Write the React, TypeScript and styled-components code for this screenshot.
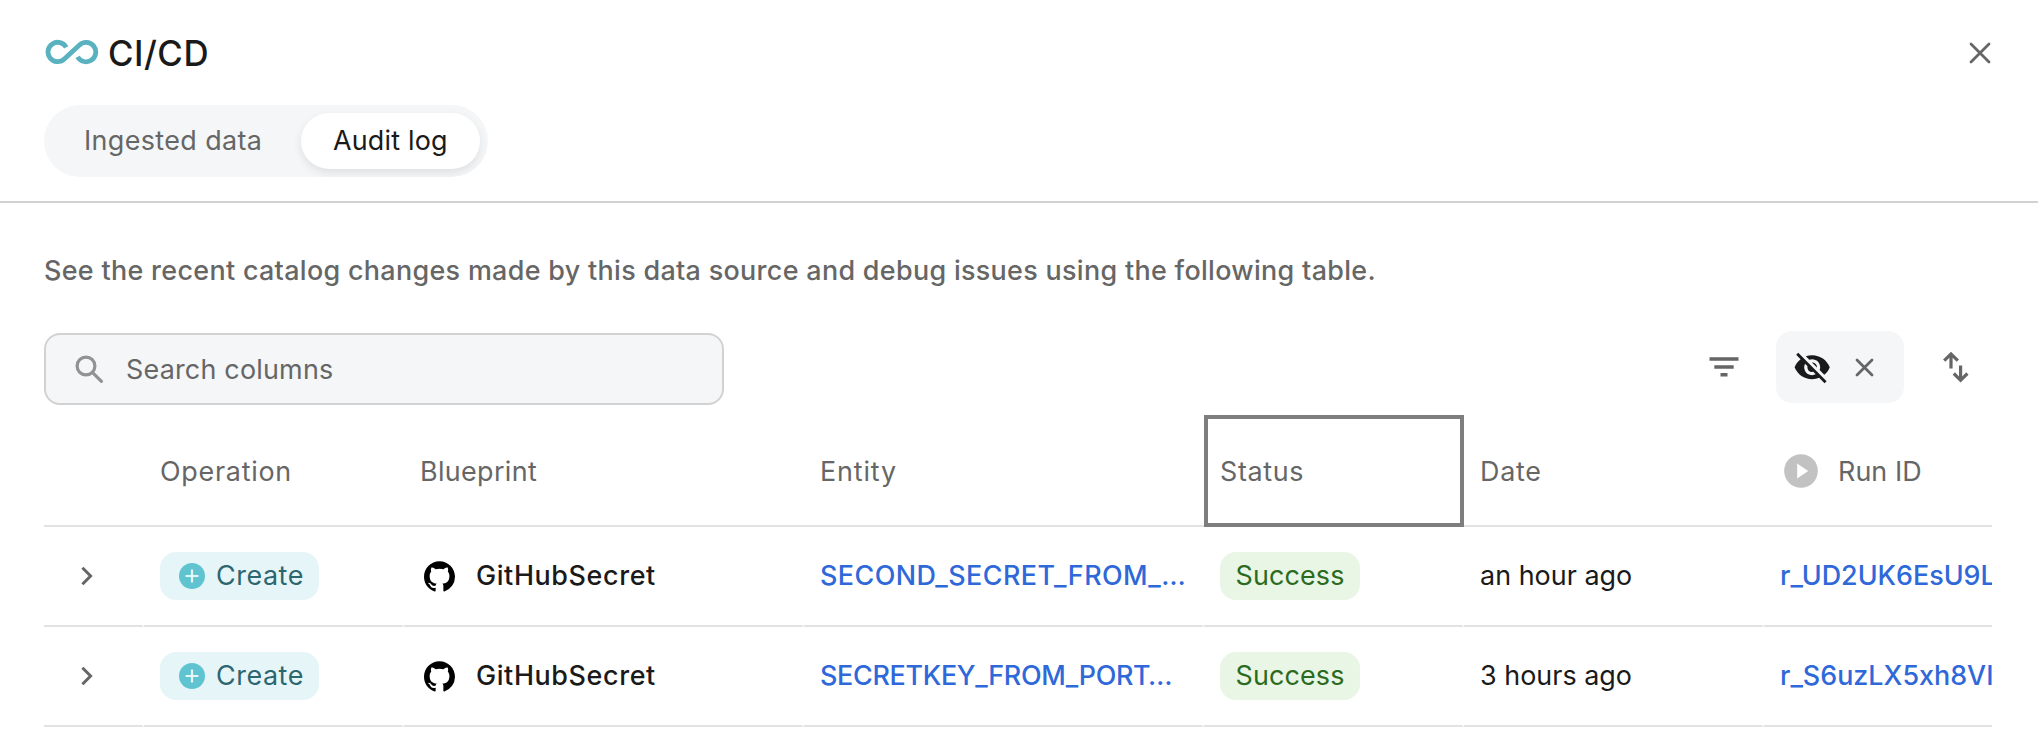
import React from 'react';
import styled, { createGlobalStyle } from 'styled-components';

const GlobalStyle = createGlobalStyle`
  *, *::before, *::after { box-sizing: border-box; }
  body {
    margin: 0;
    background: #fff;
    color: #1a1a1a;
    font-family: Inter, "Liberation Sans", sans-serif;
    font-size: 26.9px;
    line-height: 36px;
  }
  svg { display: block; flex: none; }
`;

const Page = styled.div`
  height: 752px;
  overflow: hidden;
  display: flex;
  flex-direction: column;
`;

const Header = styled.header`
  height: 203px;
  padding: 32px 44px 0;
  border-bottom: 2px solid #d2d2d2;
`;

const TitleRow = styled.div`
  display: flex;
  align-items: center;
  justify-content: space-between;
  height: 41px;
`;

const Title = styled.h1`
  display: flex;
  align-items: center;
  gap: 8px;
  margin: 0;
  font-size: 34.8px;
  font-weight: 450;
  letter-spacing: 0.5px;
`;

const IconButton = styled.button`
  display: flex;
  align-items: center;
  justify-content: center;
  width: 40px;
  height: 40px;
  padding: 0;
  border: 0;
  background: none;
  color: #666;
`;

const CloseButton = styled(IconButton)`
  margin-right: -6px;
`;

const Tabs = styled.nav`
  display: flex;
  width: 444px;
  height: 72px;
  margin-top: 32px;
  padding: 8px;
  border-radius: 36px;
  background: #f4f6f8;
  overflow: hidden;
`;

const Tab = styled.button<{ $active?: boolean; $spacing: number }>`
  flex: none;
  width: ${p => (p.$active ? 179 : 249)}px;
  height: 56px;
  padding: 0 0 2px 32px;
  border: 0;
  border-radius: 28px;
  text-align: left;
  white-space: nowrap;
  font: inherit;
  letter-spacing: ${p => p.$spacing}px;
  color: ${p => (p.$active ? '#1a1a1a' : '#666')};
  background: ${p => (p.$active ? '#fff' : 'transparent')};
  box-shadow: ${p => (p.$active ? '0 4px 10px rgba(0, 0, 0, 0.09)' : 'none')};
`;

const Main = styled.main`
  padding: 49px 46px 0 44px;
`;

const Description = styled.p`
  margin: 0;
  color: #666;
  font-weight: 500;
  letter-spacing: 0.33px;
  white-space: nowrap;
`;

const Toolbar = styled.div`
  display: flex;
  justify-content: space-between;
  height: 84px;
  margin-top: 43px;
`;

const Search = styled.div`
  display: flex;
  align-items: center;
  gap: 22px;
  width: 680px;
  height: 72px;
  margin-top: 2px;
  padding: 0 28px 1px;
  border: 2px solid #d2d2d2;
  border-radius: 16px;
  background: #f4f6f8;
  color: #929292;
`;

const SearchPlaceholder = styled.span`
  color: #666;
  letter-spacing: 0.22px;
`;

const Actions = styled.div`
  display: flex;
  align-items: center;
  gap: 32px;
  height: 72px;
  padding-right: 16px;
`;

const HiddenFields = styled.div`
  display: flex;
  align-items: center;
  justify-content: space-between;
  width: 128px;
  height: 72px;
  padding: 0 20px 0 17px;
  border-radius: 16px;
  background: #f4f6f8;
  color: #1a1a1a;
`;

const TableWrap = styled.div`
  width: 1948px;
  overflow: hidden;
`;

const Table = styled.div`
  width: 2120px;
`;

const Row = styled.div<{ $head?: boolean }>`
  display: grid;
  grid-template-columns: 100px 260px 400px 400px 260px 300px 400px;
  height: ${p => (p.$head ? 112 : 100)}px;
`;

const HeadCell = styled.div<{ $focused?: boolean; $spacing?: number }>`
  display: flex;
  align-items: center;
  padding: ${p => (p.$focused ? '0 12px' : '2px 16px 0')};
  border-bottom: 2px solid #e2e2e2;
  ${p => p.$focused && 'border: 4px solid #7e7e7e;'}
  color: #666;
  letter-spacing: ${p => p.$spacing ?? 0}px;
  white-space: nowrap;
`;

const Cell = styled.div<{ $pad?: number }>`
  display: flex;
  align-items: center;
  padding-left: ${p => p.$pad ?? 16}px;
  border-bottom: 2px solid #e2e2e2;
  border-right: 2px solid #fff;
  white-space: nowrap;
`;

const RunHead = styled.span`
  display: flex;
  align-items: center;
  gap: 17px;
  padding-left: 1px;
`;

const Text = styled.span<{ $spacing?: number; $medium?: boolean }>`
  padding-bottom: 2px;
  font-weight: ${p => (p.$medium ? 500 : 400)};
  letter-spacing: ${p => p.$spacing ?? 0}px;
`;

const Link = styled.a<{ $spacing?: number }>`
  padding-bottom: 2px;
  color: #2e68d9;
  font-weight: 500;
  letter-spacing: ${p => p.$spacing ?? 0}px;
`;

const Badge = styled.span<{ $tone: 'create' | 'success' }>`
  display: flex;
  align-items: center;
  gap: 11px;
  height: 48px;
  width: ${p => (p.$tone === 'create' ? 159 : 140)}px;
  padding: 0 0 0 ${p => (p.$tone === 'create' ? 19 : 15.5)}px;
  border-radius: 16px;
  background: ${p => (p.$tone === 'create' ? '#e6f5f8' : '#e9f5e5')};
  color: ${p => (p.$tone === 'create' ? '#2c666e' : '#2a6b20')};
`;

const Blueprint = styled.span`
  display: flex;
  align-items: center;
  gap: 21px;
`;

const InfinityIcon = () => (
  <svg width="56" height="28" viewBox="0 0 56 28" fill="none" stroke="#5ab2c0" strokeWidth="4.8">
    <path d="M22.2 8.3A9.7 9.7 0 1 0 20.3 20.1L35.2 6.2A9.7 9.7 0 1 1 33.6 17.8" />
  </svg>
);

const CrossIcon = ({ size, weight }: { size: number; weight: number }) => (
  <svg width={size} height={size} viewBox={`0 0 ${size} ${size}`} stroke="#666" strokeWidth={weight} strokeLinecap="round">
    <path d={`M2 2 ${size - 2} ${size - 2}M${size - 2} 2 2 ${size - 2}`} />
  </svg>
);

const SearchIcon = () => (
  <svg width="30" height="30" viewBox="0 0 30 30" fill="none" stroke="currentColor" strokeWidth="3.2" strokeLinecap="round">
    <circle cx="12" cy="12" r="8.9" />
    <path d="M18.6 18.6 27.4 27.4" />
  </svg>
);

const FilterIcon = () => (
  <svg width="40" height="40" viewBox="0 0 40 40" fill="currentColor">
    <path d="M5.5 10.2h29v3.6h-29zM10.3 18.2h19.4v3.5H10.3zM16.5 26h7v3.5h-7z" />
  </svg>
);

const EyeOffIcon = () => (
  <svg width="38.4" height="38.4" viewBox="0 0 24 24" fill="currentColor">
    <path d="M12 7c2.76 0 5 2.24 5 5 0 .65-.13 1.26-.36 1.83l2.92 2.92c1.51-1.26 2.7-2.89 3.43-4.75-1.73-4.39-6-7.5-11-7.5-1.4 0-2.74.25-3.98.7l2.16 2.16C10.74 7.13 11.35 7 12 7zM2 4.27l2.28 2.28.46.46C3.08 8.3 1.78 10.02 1 12c1.73 4.39 6 7.5 11 7.5 1.55 0 3.03-.3 4.38-.84l.42.42L19.73 22 21 20.73 3.27 3 2 4.27zM7.53 9.8l1.55 1.55c-.05.21-.08.43-.08.65 0 1.66 1.34 3 3 3 .22 0 .44-.03.65-.08l1.55 1.55c-.67.33-1.41.53-2.2.53-2.76 0-5-2.24-5-5 0-.79.2-1.53.53-2.2zm4.31-.78 3.15 3.15.02-.16c0-1.66-1.34-3-3-3l-.17.01z" />
  </svg>
);

const SortIcon = () => (
  <svg width="28" height="34" viewBox="0 0 28 34" fill="none" stroke="currentColor" strokeWidth="3.2">
    <path d="M9 18.6V4.4M2.2 10.7 9 3.9l6.8 6.8" />
    <path d="M18.6 15.6v14.2M11.8 23.5l6.8 6.8 6.8-6.8" />
  </svg>
);

const PlayIcon = () => (
  <svg width="40" height="40" viewBox="0 0 24 24" fill="#c2c2c2">
    <path d="M12 1.9a10.1 10.1 0 1 0 0 20.2 10.1 10.1 0 0 0 0-20.2zM9.7 16.5v-9l6.6 4.5z" />
  </svg>
);

const ChevronIcon = () => (
  <svg width="14" height="22" viewBox="0 0 14 22" fill="none" stroke="#666" strokeWidth="3">
    <path d="M2.4 2.8 10.6 11 2.4 19.2" />
  </svg>
);

const PlusIcon = () => (
  <svg width="26" height="26" viewBox="0 0 26 26">
    <circle cx="13" cy="13" r="13" fill="#5fc4d0" />
    <path d="M13 6.6v12.8M6.6 13h12.8" stroke="#e6f5f8" strokeWidth="2.2" />
  </svg>
);

const GitHubIcon = () => (
  <svg width="31" height="31" viewBox="0 0 16 15.8" fill="#000">
    <path d="M8 0C3.58 0 0 3.58 0 8c0 3.54 2.29 6.53 5.47 7.59.4.07.55-.17.55-.38 0-.19-.01-.82-.01-1.49-2.01.37-2.53-.49-2.69-.94-.09-.23-.48-.94-.82-1.13-.28-.15-.68-.52-.01-.53.63-.01 1.08.58 1.23.82.72 1.21 1.87.87 2.33.66.07-.52.28-.87.51-1.07-1.78-.2-3.64-.89-3.64-3.95 0-.87.31-1.59.82-2.15-.08-.2-.36-1.02.08-2.12 0 0 .67-.21 2.2.82.64-.18 1.32-.27 2-.27s1.36.09 2 .27c1.53-1.04 2.2-.82 2.2-.82.44 1.1.16 1.92.08 2.12.51.56.82 1.27.82 2.15 0 3.07-1.87 3.75-3.65 3.95.29.25.54.73.54 1.48 0 1.07-.01 1.93-.01 2.2 0 .21.15.46.55.38A8.01 8.01 0 0 0 16 8c0-4.42-3.58-8-8-8z" />
  </svg>
);

const rows = [
  { entity: 'SECOND_SECRET_FROM_…', entitySpacing: 0.46, date: 'an hour ago', run: 'r_UD2UK6EsU9L' },
  { entity: 'SECRETKEY_FROM_PORT…', entitySpacing: -0.3, date: '3 hours ago', run: 'r_S6uzLX5xh8VI' },
];

export default function App() {
  return (
    <Page>
      <GlobalStyle />
      <Header>
        <TitleRow>
          <Title>
            <InfinityIcon />
            CI/CD
          </Title>
          <CloseButton aria-label="Close"><CrossIcon size={22} weight={2.8} /></CloseButton>
        </TitleRow>
        <Tabs>
          <Tab $spacing={0.38}>Ingested data</Tab>
          <Tab $active $spacing={0.2}>Audit log</Tab>
        </Tabs>
      </Header>
      <Main>
        <Description>
          See the recent catalog changes made by this data source and debug issues using the following table.
        </Description>
        <Toolbar>
          <Search>
            <SearchIcon />
            <SearchPlaceholder>Search columns</SearchPlaceholder>
          </Search>
          <Actions>
            <IconButton aria-label="Filter"><FilterIcon /></IconButton>
            <HiddenFields>
              <EyeOffIcon />
              <IconButton aria-label="Show all columns"><CrossIcon size={19} weight={2.8} /></IconButton>
            </HiddenFields>
            <IconButton aria-label="Sort"><SortIcon /></IconButton>
          </Actions>
        </Toolbar>
        <TableWrap>
          <Table>
            <Row $head>
              <HeadCell />
              <HeadCell $spacing={0.75}>Operation</HeadCell>
              <HeadCell $spacing={0.35}>Blueprint</HeadCell>
              <HeadCell $spacing={0.85}>Entity</HeadCell>
              <HeadCell $focused $spacing={0.65}>Status</HeadCell>
              <HeadCell $spacing={0.75}>Date</HeadCell>
              <HeadCell $spacing={0.07}>
                <RunHead><PlayIcon />Run ID</RunHead>
              </HeadCell>
            </Row>
            {rows.map(row => (
              <Row key={row.run}>
                <Cell $pad={36}><ChevronIcon /></Cell>
                <Cell>
                  <Badge $tone="create"><PlusIcon /><Text $spacing={0.55}>Create</Text></Badge>
                </Cell>
                <Cell $pad={20}>
                  <Blueprint><GitHubIcon /><Text $medium $spacing={0.62}>GitHubSecret</Text></Blueprint>
                </Cell>
                <Cell><Link $spacing={row.entitySpacing}>{row.entity}</Link></Cell>
                <Cell>
                  <Badge $tone="success"><Text $spacing={0.15}>Success</Text></Badge>
                </Cell>
                <Cell><Text $spacing={0.03}>{row.date}</Text></Cell>
                <Cell><Link>{row.run}</Link></Cell>
              </Row>
            ))}
          </Table>
        </TableWrap>
      </Main>
    </Page>
  );
}
